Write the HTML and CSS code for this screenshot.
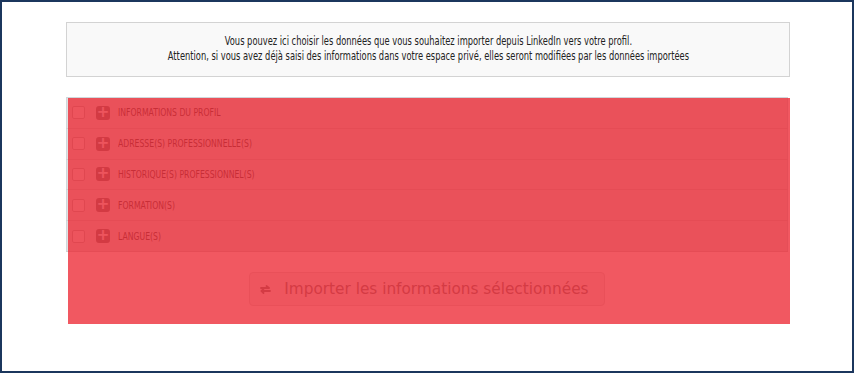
FILE: index.html
```html
<html>
<head>
<meta charset="utf-8">
<link rel="stylesheet" href="styles.css">
</head>
<body>
<div class="frame">
	<div class="content">
		<div class="notice">
			<span class="narrow">Vous pouvez ici choisir les données que vous souhaitez importer depuis LinkedIn vers votre profil.</span><br>
			<span class="narrow">Attention, si vous avez déjà saisi des informations dans votre espace privé, elles seront modifiées par les données importées</span>
		</div>

		<div class="import">
			<table class="sections">
				<tr><td><span class="check"></span><span class="plus">+</span><span class="label">Informations du profil</span></td></tr>
				<tr><td><span class="check"></span><span class="plus">+</span><span class="label">Adresse(s) professionnelle(s)</span></td></tr>
				<tr><td><span class="check"></span><span class="plus">+</span><span class="label">Historique(s) professionnel(s)</span></td></tr>
				<tr><td><span class="check"></span><span class="plus">+</span><span class="label">Formation(s)</span></td></tr>
				<tr><td><span class="check"></span><span class="plus">+</span><span class="label">Langue(s)</span></td></tr>
			</table>
			<div class="actions">
				<button class="btn" disabled>
					<svg width="11" height="9" viewBox="0 0 11 9"><path d="M1 3h8M6.5 1l2.5 2M2 6h8M3.5 4L1.5 6l2 2" fill="none" stroke="currentColor" stroke-width="1.8" stroke-linecap="round"/></svg>
					Importer les informations sélectionnées
				</button>
			</div>
			<div class="mask"></div>
		</div>
	</div>
</div>
</body>
</html>
```

FILE: styles.css
```css
body{
margin: 0;
background: #fff;
font-family: "DejaVu Sans Condensed", sans-serif;
}
.frame{
width: 850px;
height: 369px;
border: 2px solid #1b365d;
}
.content{
width: 724px;
margin: 20px 0 0 64px;
}
.notice{
background: #f9f9f9;
border: 1px solid #d3d3d3;
padding: 11px 0 12px;
text-align: center;
font-size: 12px;
line-height: 15px;
color: #222;
white-space: nowrap;
}
.narrow{
display: inline-block;
transform: scaleX(0.77);
}
.import{
position: relative;
margin-top: 20px;
width: 722px;
padding-bottom: 18px;
}
.sections{
width: 722px;
border-collapse: collapse;
border: 1px solid #cfd8dc;
}
.sections td{
height: 30.8px;
padding: 0 0 0 5px;
border-bottom: 1px solid #d0d0d0;
background: #e2e2e2;
font-size: 11px;
text-transform: uppercase;
color: #5a5a5a;
white-space: nowrap;
}
.label{
display: inline-block;
transform: scaleX(0.78);
transform-origin: left center;
vertical-align: middle;
}
.check{
display: inline-block;
width: 11px;
height: 11px;
border: 1px solid #bbb;
border-radius: 2px;
background: #eee;
vertical-align: middle;
margin-right: 11px;
}
.plus{
display: inline-block;
width: 14px;
height: 14px;
line-height: 13px;
border-radius: 3px;
background: #888;
color: #eee;
font-family: "DejaVu Sans", sans-serif;
font-size: 15px;
font-weight: bold;
text-align: center;
vertical-align: middle;
margin-right: 8px;
}
.actions{
padding-top: 20px;
text-align: center;
}
.btn{
height: 34px;
padding: 0 15px 0 10px;
background: #f2f2f2;
border: 1px solid #ddd;
border-radius: 4px;
font-family: "DejaVu Sans", sans-serif;
font-size: 15.3px;
color: #8a8a8a;
}
.btn svg{
margin-right: 8px;
}
.mask{
position: absolute;
top: 1px;
left: 2px;
right: -2px;
bottom: 0;
background: rgba(236, 32, 44, 0.75);
}
```
